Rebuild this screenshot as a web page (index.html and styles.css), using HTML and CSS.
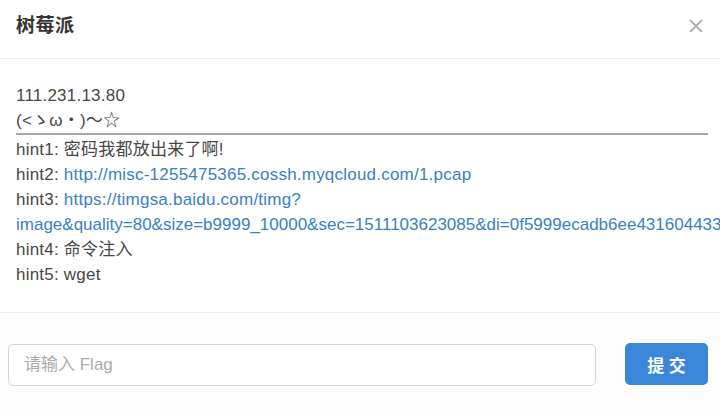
FILE: index.html
```html
<!DOCTYPE html>
<html lang="zh">
<head>
<meta charset="utf-8">
<title>树莓派</title>
<link rel="stylesheet" href="styles.css">
</head>
<body>
<div class="modal">
  <div class="modal-header">
    <h4 class="modal-title">树莓派</h4>
    <button class="close" type="button" aria-label="关闭">
      <svg width="14" height="14" viewBox="0 0 14 14"><path d="M1 1L13 13M13 1L1 13" stroke="#9a9a9a" stroke-width="1.6" fill="none"/></svg>
    </button>
  </div>
  <div class="modal-body">
    <div class="line">111.231.13.80</div>
    <div class="line">(&lt;ゝω・)～☆</div>
    <hr class="sep">
    <div class="line">hint1: 密码我都放出来了啊!</div>
    <div class="line">hint2: <a class="link" href="#">http://misc-1255475365.cossh.myqcloud.com/1.pcap</a></div>
    <div class="line">hint3: <a class="link" href="#">https://timgsa.baidu.com/timg?<br><span class="tight">image&amp;quality=80&amp;size=b9999_10000&amp;sec=1511103623085&amp;di=0f5999ecadb6ee431604433</span></a></div>
    <div class="line">hint4: 命令注入</div>
    <div class="line">hint5: wget</div>
  </div>
  <div class="modal-footer">
    <input class="flag-input" type="text" placeholder="请输入 Flag">
    <button class="submit" type="button">提 交</button>
  </div>
</div>
</body>
</html>
```
FILE: styles.css
```css
html, body {
  margin: 0;
  padding: 0;
  background: #ffffff;
  overflow: hidden;
}
body {
  font-family: "Liberation Sans", "Noto Sans CJK SC", sans-serif;
  color: #474747;
  width: 720px;
  height: 413px;
}
.modal {
  width: 720px;
  height: 413px;
  display: flex;
  flex-direction: column;
}
.modal-header {
  height: 59px;
  box-sizing: border-box;
  padding: 14px 17px 0 16px;
  border-bottom: 1px solid #ececec;
  display: flex;
  justify-content: space-between;
  align-items: flex-start;
}
.modal-title {
  margin: 0;
  font-size: 19px;
  line-height: 24px;
  font-weight: bold;
  letter-spacing: 0.5px;
  color: #333;
}
.close {
  border: 0;
  background: none;
  padding: 0;
  height: 24px;
  display: flex;
  align-items: center;
  cursor: pointer;
}
.modal-body {
  padding: 23.5px 12px 25.5px 16px;
  font-size: 17px;
  line-height: 25px;
  letter-spacing: 0.22px;
}
.line {
  white-space: nowrap;
}
.tight {
  letter-spacing: 0;
}
.sep {
  margin: 0 0 2px 0;
  border: 0;
  height: 2px;
  background: #a8a8a8;
}
.link {
  color: #3a80c4;
  text-decoration: none;
}
.modal-footer {
  flex: 1;
  border-top: 1px solid #ececec;
  padding: 30px 12px 0 8px;
  display: flex;
  align-items: flex-start;
  gap: 29px;
  background: #fdfdfd;
}
.flag-input {
  flex: 1;
  height: 42px;
  box-sizing: border-box;
  margin-top: 1px;
  border: 1px solid #d6d6d6;
  border-radius: 5px;
  padding: 0 15px;
  font-family: "Liberation Sans", "Noto Sans CJK SC", sans-serif;
  font-size: 17px;
  color: #333;
  background: #fff;
  outline: none;
}
.flag-input::placeholder {
  color: #acacac;
}
.submit {
  width: 83px;
  height: 42px;
  border: 0;
  border-radius: 5px;
  background: #3a87d9;
  color: #fff;
  font-family: "Liberation Sans", "Noto Sans CJK SC", sans-serif;
  font-size: 17px;
  font-weight: bold;
  cursor: pointer;
}
```
